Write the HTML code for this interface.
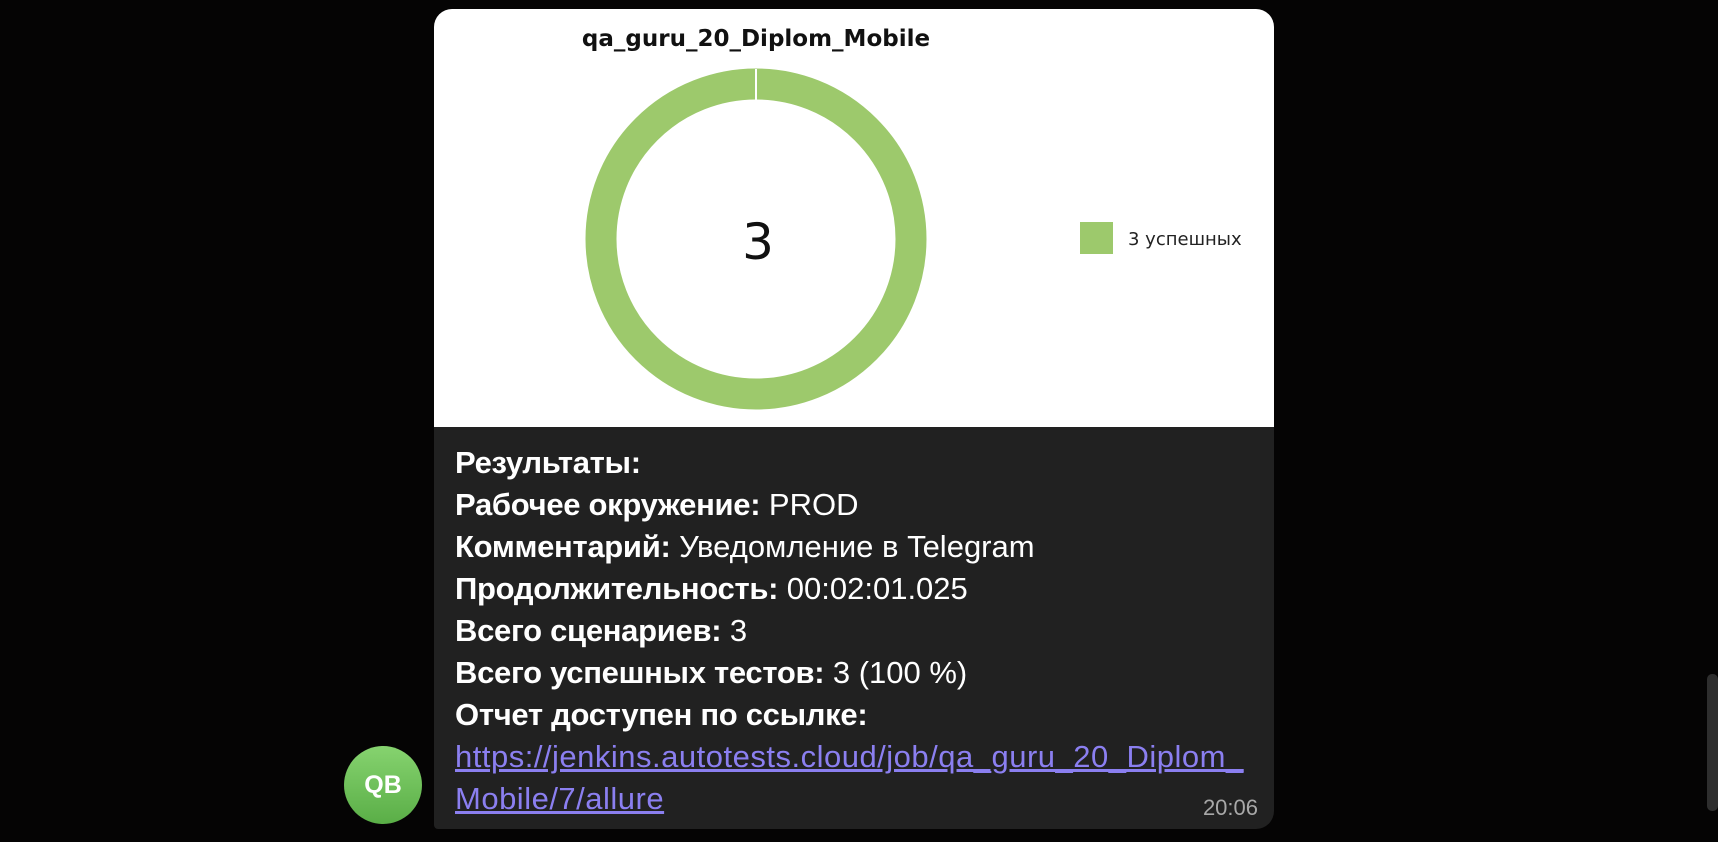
<!DOCTYPE html>
<html><head><meta charset="utf-8"><style>
html,body{margin:0;padding:0;width:1718px;height:842px;overflow:hidden;background:#050404;font-family:"Liberation Sans","DejaVu Sans",sans-serif}
.bubble{position:absolute;left:434px;top:9px;width:840px;height:820px;background:#212121;border-radius:18px 18px 18px 4px;overflow:hidden}
.chart{position:absolute;left:0;top:0;width:840px;height:418px;background:#fff}
.title{position:absolute;left:0;width:644px;top:17px;text-align:center;font-family:"DejaVu Sans",sans-serif;font-weight:bold;font-size:23px;color:#111}
.text{position:absolute;left:21px;top:433px;color:#fff;font-size:31px;line-height:42px;white-space:nowrap}
.text b{font-weight:bold;letter-spacing:-0.3px}
.text a{color:#8b7ff0;text-decoration:underline;letter-spacing:0.5px}
.time{position:absolute;right:16px;bottom:8px;color:#a8a8a8;font-size:22px}
.av{position:absolute;left:344px;top:746px;width:78px;height:78px;border-radius:50%;background:linear-gradient(#86d36f,#5aae47);color:#fff;font-size:25px;font-weight:bold;display:flex;align-items:center;justify-content:center}
.sb{position:absolute;left:1707px;top:674px;width:11px;height:137px;background:#2e2e2e;border-radius:5px}
</style></head><body>
<div class="bubble">
 <div class="chart">
  <div class="title">qa_guru_20_Diplom_Mobile</div>
  <svg width="840" height="418" style="position:absolute;left:0;top:0">
   <circle cx="322" cy="230" r="155" fill="none" stroke="#9dc96c" stroke-width="31"/>
   <line x1="322" y1="60" x2="322" y2="91" stroke="#fff" stroke-width="2"/>
   <text x="324" y="250" text-anchor="middle" font-family="DejaVu Sans,sans-serif" font-size="50" fill="#111">3</text>
   <rect x="646" y="213" width="33" height="32" fill="#9dc96c"/>
   <text x="694" y="236" font-family="DejaVu Sans,sans-serif" font-size="18" fill="#222">3 успешных</text>
  </svg>
 </div>
 <div class="text">
  <div><b>Результаты:</b></div>
  <div><b>Рабочее окружение:</b> PROD</div>
  <div><b>Комментарий:</b> Уведомление в Telegram</div>
  <div><b>Продолжительность:</b> 00:02:01.025</div>
  <div><b>Всего сценариев:</b> 3</div>
  <div><b>Всего успешных тестов:</b> 3 (100 %)</div>
  <div><b>Отчет доступен по ссылке:</b></div>
  <div><a>https://jenkins.autotests.cloud/job/qa_guru_20_Diplom_</a></div>
  <div><a>Mobile/7/allure</a></div>
 </div>
 <div class="time">20:06</div>
</div>
<div class="av">QB</div>
<div class="sb"></div>
</body></html>
